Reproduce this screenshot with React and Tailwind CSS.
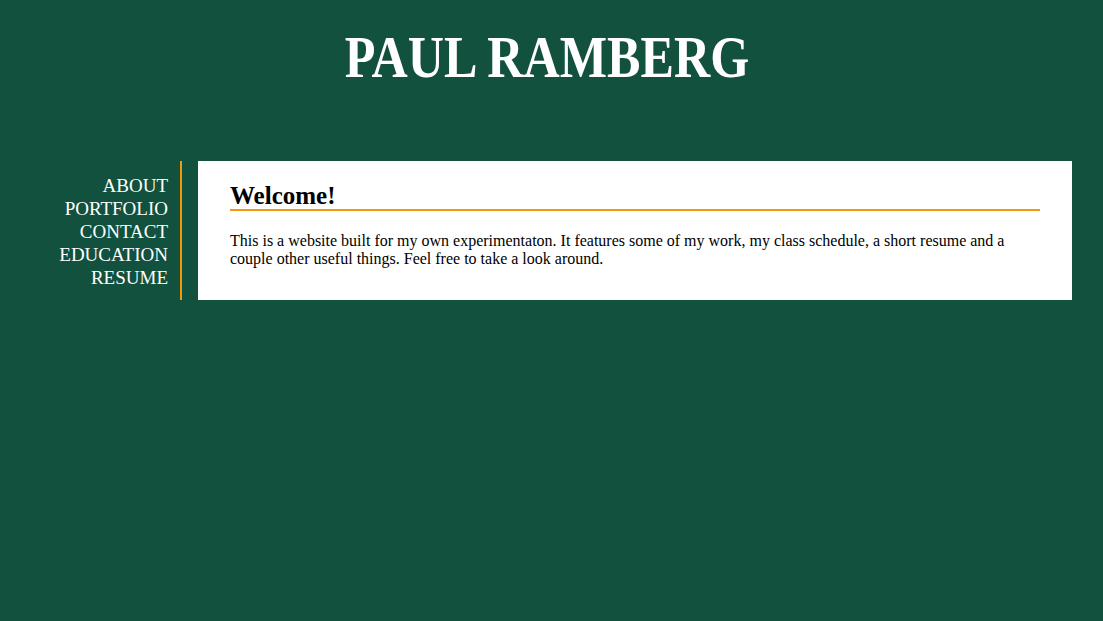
export default function App() {
  const serif = { fontFamily: '"Liberation Serif", "DejaVu Serif", serif' };
  return (
    <div className="min-h-[621px] w-full bg-[#12513e]" style={serif}>
      <header className="flex h-[161px] justify-center pt-[26px] pr-[10px]">
        <h1 className="scale-x-[0.85] whitespace-nowrap text-[59px] font-bold leading-[62px] text-white">PAUL RAMBERG</h1>
      </header>
      <div className="flex items-start gap-[16px] pr-[31px]">
        <nav className="flex w-[182px] flex-col items-end border-r-2 border-[#f39a0c] pr-[12px] pt-[13px] pb-[11px] text-[19px] leading-[23px] text-white">
          <a>ABOUT</a>
          <a>PORTFOLIO</a>
          <a>CONTACT</a>
          <a>EDUCATION</a>
          <a>RESUME</a>
        </nav>
        <main className="h-[139px] flex-1 bg-white px-[32px] pt-[21px]">
          <h2 className="border-b-2 border-[#f39a0c] text-[25px] font-bold leading-[27px] text-black">Welcome!</h2>
          <p className="mt-[21px] text-[16px] leading-[18px] text-black">
            This is a website built for my own experimentaton. It features some of my work, my class schedule, a short resume and a couple other useful things. Feel free to take a look around.
          </p>
        </main>
      </div>
    </div>
  );
}
